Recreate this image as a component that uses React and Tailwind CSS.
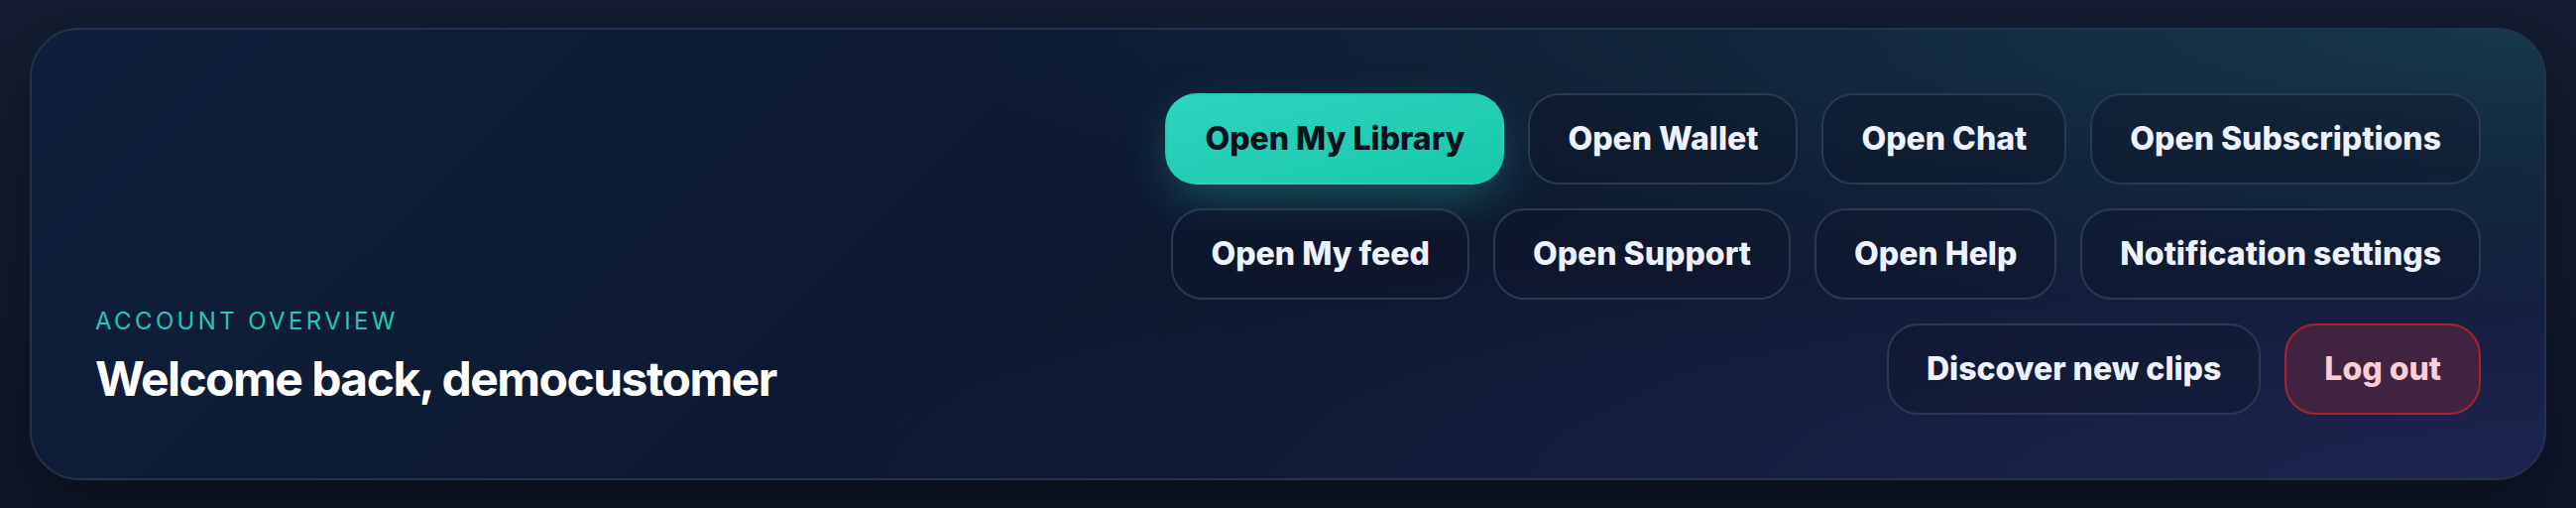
import React from "react";

const links = [
  "Open My Library",
  "Open Wallet",
  "Open Chat",
  "Open Subscriptions",
  "Open My feed",
  "Open Support",
  "Open Help",
  "Notification settings",
  "Discover new clips",
];

const App = () => {
  return (
    <section
      className="min-h-screen w-full bg-gradient-to-b from-[#141d31] to-[#0f1628] px-[30px] pt-[28px] pb-[30px]"
      style={{ fontFamily: "Inter, 'Noto Sans', sans-serif" }}
    >
      {/* hero card */}
      <div className="flex items-end justify-between rounded-[50px] border-2 border-[#24324d] bg-[radial-gradient(ellipse_at_100%_0%,rgba(30,80,95,0.55),transparent_45%),radial-gradient(ellipse_at_100%_100%,rgba(38,44,98,0.6),transparent_50%),linear-gradient(135deg,#0f1f3b_0%,#0d172d_55%,#0e1a33_100%)] p-16 shadow-[0_20px_60px_rgba(0,0,0,0.35)]">
        {/* header */}
        <div className="flex flex-col">
          <p className="text-[24px] leading-[32px] tracking-[0.14em] uppercase text-[#27c7b3] mb-[6px]">
            Account overview
          </p>
          <h1 className="text-[48px] leading-[72px] font-bold tracking-[-0.032em] text-white">
            Welcome back, democustomer
          </h1>
        </div>

        {/* actions */}
        <div className="flex max-w-[1344px] flex-wrap justify-end gap-6">
          {links.map((label, i) =>
            i === 0 ? (
              <button
                key={label}
                className="rounded-[32px] border-2 border-transparent bg-gradient-to-br from-[#2dd4bf] to-[#17c8ab] px-[38px] py-[20px] text-[32px] leading-[48px] font-extrabold text-[#06131a] shadow-[0_18px_50px_-8px_rgba(45,212,191,0.35)]"
              >
                {label}
              </button>
            ) : (
              <button
                key={label}
                className="rounded-[32px] border-2 border-[#2a3954] bg-[#0c1529]/40 px-[38px] py-[20px] text-[32px] leading-[48px] font-extrabold text-[#eef2ff]"
              >
                {label}
              </button>
            )
          )}
          <button className="rounded-[32px] border-2 border-[#a8232e] bg-[#4a2440]/80 px-[38px] py-[20px] text-[32px] leading-[48px] font-extrabold text-[#fecdd3]">
            Log out
          </button>
        </div>
      </div>
    </section>
  );
};

export default App;
